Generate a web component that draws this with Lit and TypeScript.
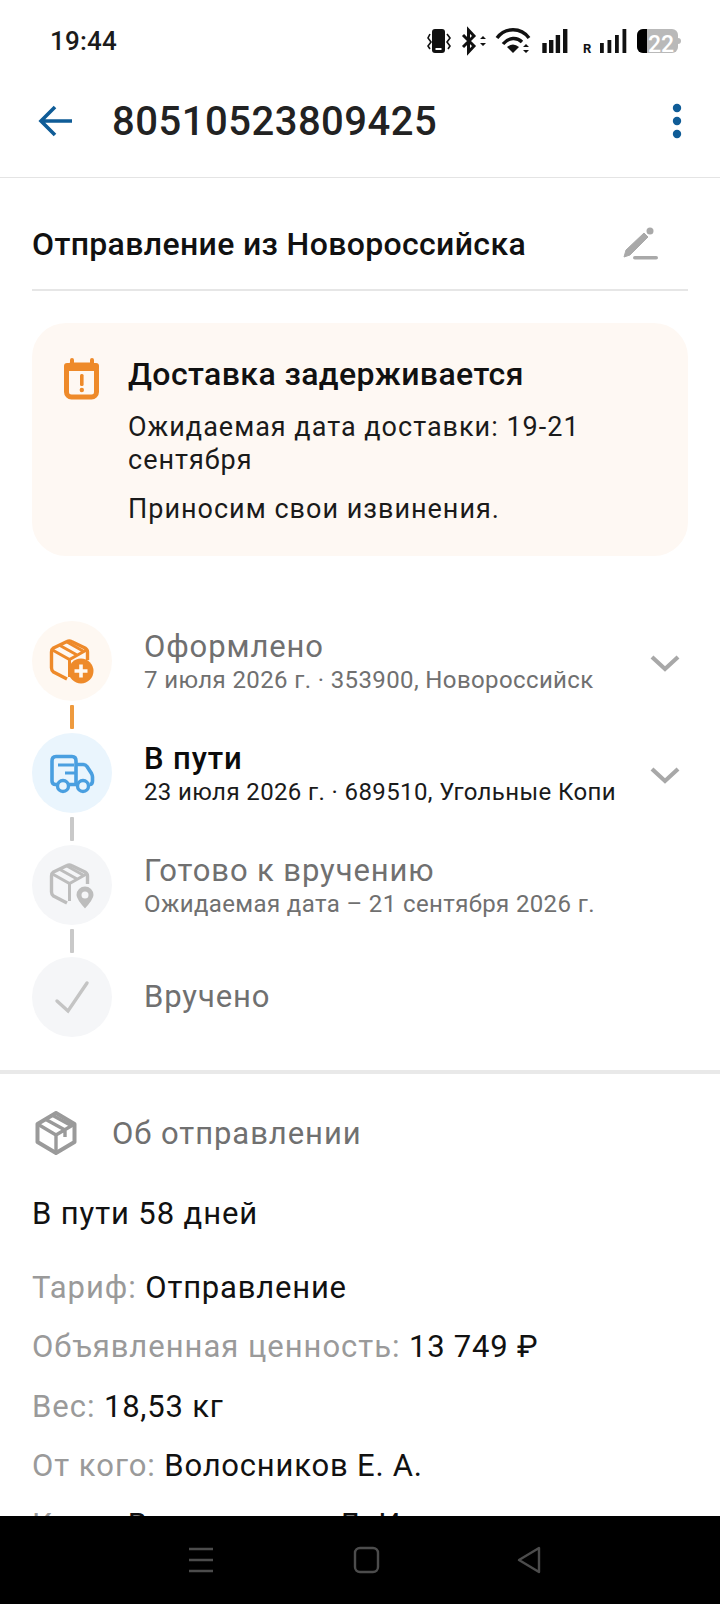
import { LitElement, html, css, svg } from "lit";
import { customElement } from "lit/decorators.js";

const chevron = html`<svg class="chev" viewBox="0 0 30 18"><path d="M2 3l13 12L28 3" fill="none" stroke="#a8a8a8" stroke-width="4.200"/></svg>`;

const box = (c: string) => svg`
  <path d="M17 40 3.500 33C2 32 1.500 31 1.500 29V13C1.500 11 2 10 3.500 9L17 2.500C18.500 1.700 20 1.700 21.500 2.500L35 9C36.500 10 37.500 11 37.500 13V21" fill="none" stroke="${c}" stroke-width="3.400" stroke-linejoin="round"/>
  <path d="M2.500 11 19.500 20.500 36.500 11M19.500 20.500V38M10 6.500 27 16M17 3 33 12" fill="none" stroke="${c}" stroke-width="3"/>`;

@customElement("app-root")
export class AppRoot extends LitElement {
  static styles = css`
    :host { display: block; width: 720px; height: 1604px; overflow: hidden; background: #fff; font-family: Roboto, "Noto Sans", sans-serif; color: #111; display: flex; flex-direction: column; }
    .page { flex: 1; min-height: 0; overflow: hidden; }
    .status { height: 82px; display: flex; align-items: center; justify-content: space-between; padding: 0 35px 0 50px; box-sizing: border-box; }
    .time { font-size: 26px; font-weight: 500; color: #1b1b1b; letter-spacing: 0.2px; }
    .sicons { display: block; width: 260px; height: 30px; }
    .appbar { height: 78px; display: flex; align-items: center; border-bottom: 1px solid #e4e4e4; padding: 0 36px 17px 38px; box-sizing: content-box; }
    .appbar .back { width: 36px; height: 32px; margin-right: 38px; }
    .appbar h1 { flex: 1; margin: 0; font-size: 40px; font-weight: 500; color: #222; letter-spacing: 0.500px; }
    .dots { width: 14px; height: 36px; }
    .named { margin: 0 32px; height: 91px; padding: 20px 28px 0 0; border-bottom: 2px solid #e6e6e6; display: flex; align-items: center; justify-content: space-between; }
    .named span { font-size: 32px; font-weight: 500; letter-spacing: 0.35px; color: #111; }
    .pen { width: 40px; height: 34px; }
    .notice { margin: 32px 32px 0; height: 233px; border-radius: 34px; background: #fef8f3; display: flex; padding: 33px 30px 0; box-sizing: border-box; gap: 27px; }
    .cal { width: 39px; height: 44px; flex: none; margin-top: 2px; }
    .notice h2 { margin: 0 0 19px; font-size: 32px; line-height: 36px; font-weight: 500; letter-spacing: 0.4px; }
    .notice p { margin: 0 0 16px; font-size: 27px; line-height: 33px; letter-spacing: 1px; color: #1a1a1a; width: 490px; }
    .timeline { margin: 65px 32px 0; display: flex; flex-direction: column; }
    .step { display: flex; align-items: center; height: 80px; }
    .dot { width: 80px; height: 80px; border-radius: 50%; flex: none; display: flex; align-items: center; justify-content: center; margin-right: 32px; }
    .dot svg { width: 44px; height: 44px; overflow: visible; }
    .dot svg.check { width: 52px; height: 52px; }
    .orange { background: #fef8f2; }
    .blue { background: #eaf5fd; }
    .grey { background: #f5f6f8; }
    .link { width: 4px; height: 24px; margin: 4px 0 4px 38px; border-radius: 1px; }
    .link.o { background: #ee9a3e; }
    .link.g { background: #c9c9c9; }
    .text { flex: 1; display: flex; flex-direction: column; padding-top: 2px; }
    .t { font-size: 31px; line-height: 36px; letter-spacing: 0.9px; color: #707070; }
    .t:only-child { margin-top: -2px; }
    .s { font-size: 24px; line-height: 30px; letter-spacing: 0.38px; color: #707070; white-space: nowrap; }
    .active .t { color: #0b0b0b; font-weight: 500; }
    .active .s { color: #1a1a1a; }
    .chev { width: 30px; height: 18px; margin: 4px 8px 0 0; flex: none; }
    .rule { height: 4px; background: #e9e9e9; margin-top: 33px; }
    .about { display: flex; align-items: center; padding: 37px 0 0 35px; height: 44px; }
    .about svg { width: 42px; height: 44px; margin-right: 35px; }
    .about span { font-size: 31px; letter-spacing: 0.95px; color: #707070; }
    .days { margin: 41px 32px 0; font-size: 31px; line-height: 36px; letter-spacing: 0.9px; color: #111; }
    .rows { margin: 38px 32px 0; display: flex; flex-direction: column; gap: 23.300px; }
    .row { font-size: 31px; line-height: 36px; letter-spacing: 0.8px; color: #111; white-space: nowrap; }
    .row b { font-weight: 400; color: #9a9a9a; letter-spacing: 0.98px; }
    .nav { height: 88px; background: #000; flex: none; display: flex; align-items: center; padding-left: 186px; }
    .nav svg { width: 370px; height: 30px; display: block; }
  `;

  render() {
    return html`
      <div class="page">
        <div class="status">
          <span class="time">19:44</span>
          <svg class="sicons" viewBox="0 0 260 30">
            <rect x="7" y="3" width="13" height="24" rx="3" fill="#111"/>
            <rect x="10.500" y="22" width="6" height="2" fill="#fff"/>
            <path d="M5 8 3 12l3 4-3 4 2 3M22 8l3 4-3 4 3 4-2 3" fill="none" stroke="#111" stroke-width="1.600"/>
            <path d="M38 9 49 20 43.500 26V4L49 10 38 21" fill="none" stroke="#111" stroke-width="3"/>
            <path d="M55 13l3-3 3 3zM55 17l3 3 3-3z" fill="#111"/>
            <path d="M72 12C80 1 96 1 104 12M78 18C84 11 92 11 97 16" fill="none" stroke="#111" stroke-width="3.400"/>
            <path d="M82 21Q88 16 94 21L88 27z" fill="#111"/>
            <path d="M98 21l3-3 3 3zM98 24l3 3 3-3z" fill="#111"/>
            <path d="M117.300 17h4.400v10h-4.400zM124 14h4.400v13H124zM130.700 9h4.400v18h-4.400zM138 3h4.400v24H138z" fill="#111"/>
            <text x="158" y="27" font-family="Roboto" font-size="13" font-weight="700" fill="#111">R</text>
            <path d="M175 17h3.800v10H175zM182.500 14h3.800v13h-3.800zM190 9h3.800v18H190zM197.500 3h3.800v24h-3.800z" fill="#111"/>
            <rect x="212" y="3" width="41" height="24" rx="6" fill="#b9b9b9"/>
            <path d="M218 3h4v24h-4a6 6 0 0 1-6-6V9a6 6 0 0 1 6-6z" fill="#000"/>
            <path d="M253 12a3 3 0 0 1 3 3 3 3 0 0 1-3 3z" fill="#b9b9b9"/>
            <text x="223" y="25.500" font-family="Roboto" font-size="23" font-weight="500" fill="#fff">22</text>
          </svg>
        </div>
        <div class="appbar">
          <svg class="back" viewBox="0 0 36 32"><path d="M34 16H4M17 2 3 16l14 14" fill="none" stroke="#0f5c97" stroke-width="3.600"/></svg>
          <h1>80510523809425</h1>
          <svg class="dots" viewBox="0 0 14 36"><circle cx="7" cy="5" r="4.200" fill="#0f5c97"/><circle cx="7" cy="18" r="4.200" fill="#0f5c97"/><circle cx="7" cy="31" r="4.200" fill="#0f5c97"/></svg>
        </div>
        <div class="named">
          <span>Отправление из Новороссийска</span>
          <svg class="pen" viewBox="0 0 40 34">
            <path d="M4 30 6 23 24 6 28 10 10 28z" fill="#a9a9a9" stroke="#a9a9a9" stroke-width="1" stroke-linejoin="round"/>
            <circle cx="30" cy="4" r="3.500" fill="#a9a9a9"/>
            <rect x="13" y="29" width="25" height="3.600" rx="1.800" fill="#a9a9a9"/>
          </svg>
        </div>
        <div class="notice">
          <svg class="cal" viewBox="0 0 39 44">
            <path d="M10 2v6M30 2v6" stroke="#ee8a2a" stroke-width="4" stroke-linecap="round"/>
            <rect x="4.500" y="7" width="30" height="32" rx="5" fill="none" stroke="#ee8a2a" stroke-width="5"/>
            <rect x="2" y="5" width="35" height="8" rx="3" fill="#ee8a2a"/>
            <rect x="18" y="16" width="3.600" height="12" rx="1.500" fill="#ee8a2a"/><circle cx="19.800" cy="32" r="2.200" fill="#ee8a2a"/>
          </svg>
          <div>
            <h2>Доставка задерживается</h2>
            <p>Ожидаемая дата доставки: 19-21 сентября</p>
            <p>Приносим свои извинения.</p>
          </div>
        </div>
        <div class="timeline">
          <div class="step">
            <div class="dot orange"><svg viewBox="0 0 44 44">
              ${box("#ee8a2a")}
              <circle cx="31" cy="32" r="12.500" fill="#ee8a2a"/><path d="M31 25.500v13M24.500 32h13" stroke="#fef8f2" stroke-width="3.600"/>
            </svg></div>
            <div class="text"><span class="t">Оформлено</span><span class="s">7 июля 2026 г. · 353900, Новороссийск</span></div>
            ${chevron}
          </div>
          <div class="link o"></div>
          <div class="step active">
            <div class="dot blue"><svg viewBox="0 0 44 44">
              <path d="M7 33.500H5.500C3 33.500 2 32 2 30V10C2 7 3 5.500 6 5.500H22C25 5.500 26 7 26 10V33.500H19M26 13.500H33C35 13.500 36 14 37 15.500L41.500 22.500C42 23.500 42.500 24.500 42.500 26V30C42.500 32 41.500 33.500 39.500 33.500M26 33.500H27" fill="none" stroke="#4a9fe0" stroke-width="3.600"/>
              <circle cx="13" cy="35" r="5.500" fill="none" stroke="#4a9fe0" stroke-width="3.400"/><circle cx="33" cy="35" r="5.500" fill="none" stroke="#4a9fe0" stroke-width="3.400"/>
              <path d="M8 14H24M15 22H26" stroke="#4a9fe0" stroke-width="3"/>
            </svg></div>
            <div class="text"><span class="t">В пути</span><span class="s">23 июля 2026 г. · 689510, Угольные Копи</span></div>
            ${chevron}
          </div>
          <div class="link g"></div>
          <div class="step">
            <div class="dot grey"><svg viewBox="0 0 44 44">
              ${box("#bdbdbd")}
              <path d="M35 47C29.500 41 25.500 36.500 25.500 32A9.500 9.500 0 0 1 44.500 32C44.500 36.500 40.500 41 35 47z" fill="#bdbdbd" stroke="#f5f6f8" stroke-width="2"/><circle cx="35" cy="32" r="3.500" fill="#f5f6f8"/>
            </svg></div>
            <div class="text"><span class="t">Готово к вручению</span><span class="s">Ожидаемая дата – 21 сентября 2026 г.</span></div>
          </div>
          <div class="link g"></div>
          <div class="step">
            <div class="dot grey"><svg class="check" viewBox="0 0 52 52"><path d="M11 30l11 10L41 12" fill="none" stroke="#c4c4c4" stroke-width="3.400" stroke-linecap="round"/></svg></div>
            <div class="text"><span class="t">Вручено</span></div>
          </div>
        </div>
        <div class="rule"></div>
        <div class="about">
          <svg viewBox="0 0 42 44">
            <path d="M21 2 39.500 13V31L21 42 2.500 31V13z" fill="none" stroke="#9a9a9a" stroke-width="4" stroke-linejoin="round"/>
            <path d="M2.500 13 21 24 39.500 13M21 24V42M10 8 30 19V26M17 4 37 15" fill="none" stroke="#9a9a9a" stroke-width="3.400"/>
          </svg>
          <span>Об отправлении</span>
        </div>
        <div class="days">В пути 58 дней</div>
        <div class="rows">
          <div class="row"><b>Тариф:</b> Отправление</div>
          <div class="row"><b>Объявленная ценность:</b> 13 749 ₽</div>
          <div class="row"><b>Вес:</b> 18,53 кг</div>
          <div class="row"><b>От кого:</b> Волосников Е. А.</div>
          <div class="row"><b>Кому:</b> Волосникова Л. И.</div>
        </div>
      </div>
      <div class="nav">
        <svg viewBox="0 0 370 30">
          <path d="M3 4h24M3 15h24M3 26h24" stroke="#4c4c4c" stroke-width="2.400"/>
          <rect x="169" y="3" width="23" height="24" rx="5" fill="none" stroke="#4c4c4c" stroke-width="2.400"/>
          <path d="M353 3v24l-20-12z" fill="none" stroke="#4c4c4c" stroke-width="2.400" stroke-linejoin="round"/>
        </svg>
      </div>
    `;
  }
}
